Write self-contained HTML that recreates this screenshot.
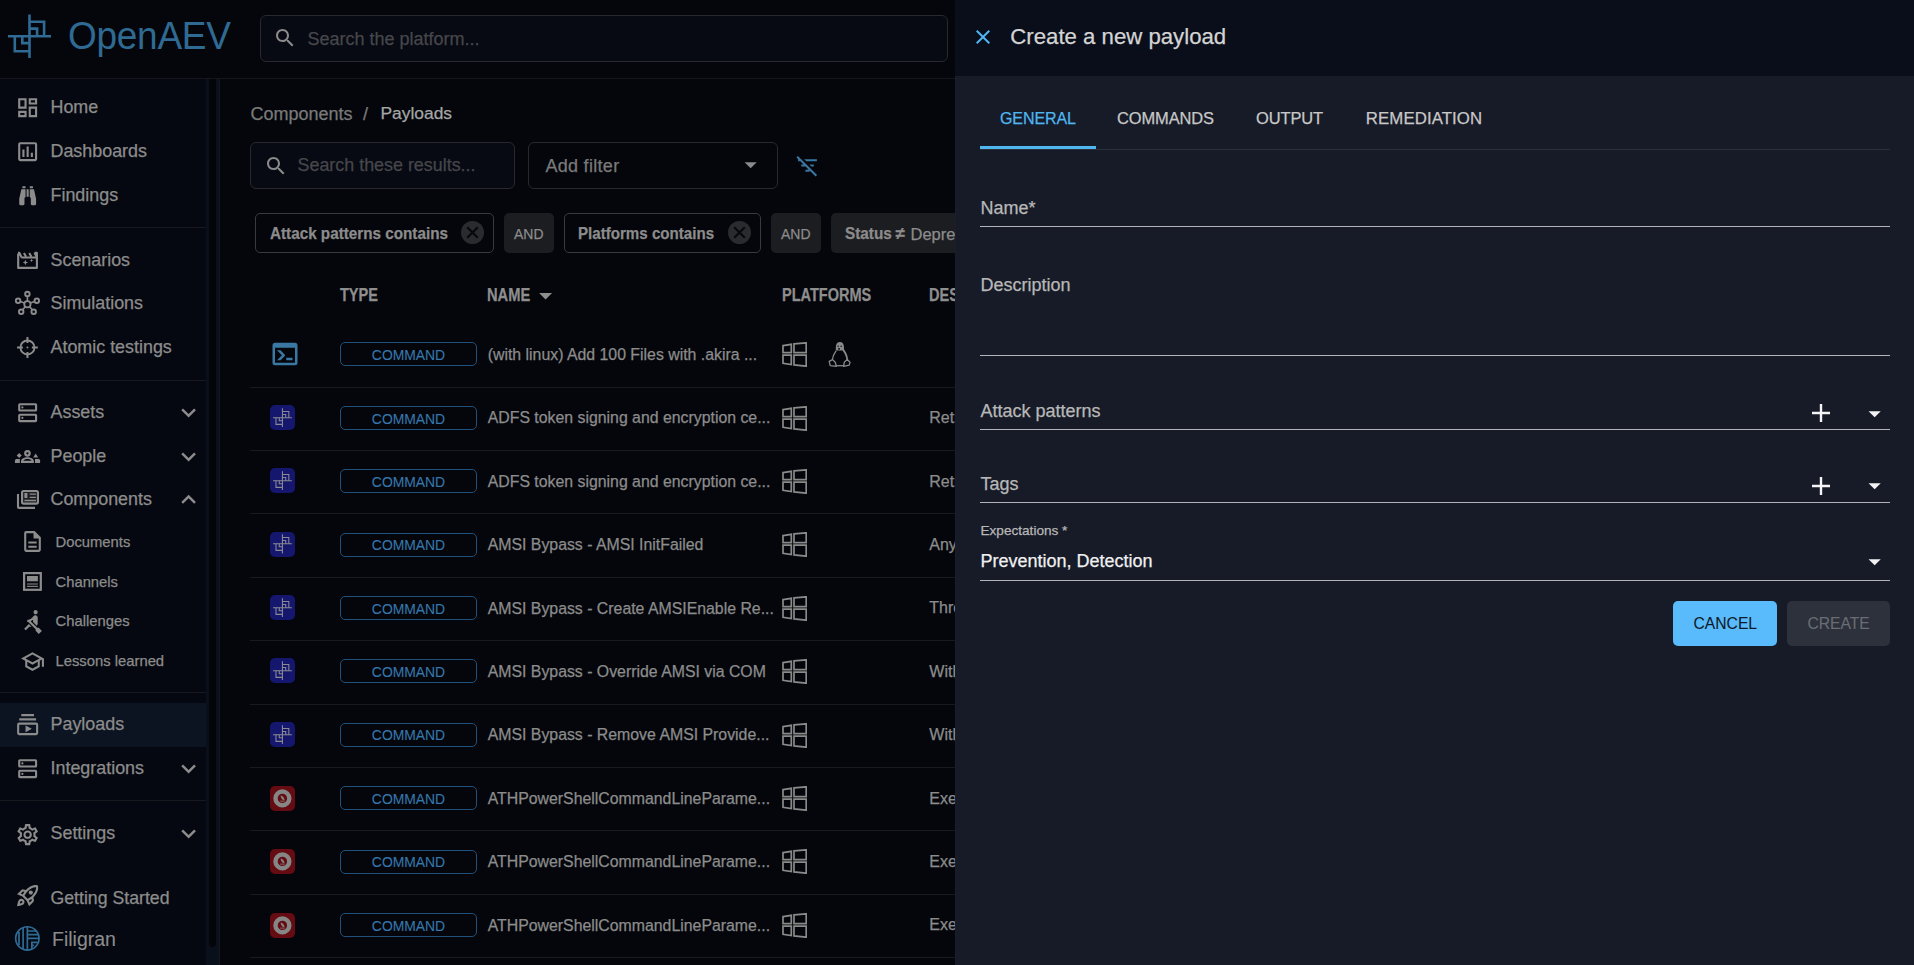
<!DOCTYPE html><html><head><meta charset="utf-8"><style>
html,body{margin:0;padding:0;}
body{width:1914px;height:965px;overflow:hidden;position:relative;background:#04060b;font-family:"Liberation Sans", sans-serif;}
.t{position:absolute;white-space:nowrap;font-family:"Liberation Sans", sans-serif;-webkit-text-stroke:0.25px currentColor;}
svg{display:block}
</style></head><body>
<div style="position:absolute;left:0px;top:0px;width:1914px;height:78px;background:#04060b"></div>
<div style="position:absolute;left:0px;top:78px;width:955px;height:1px;background:#15171c"></div>
<svg style="position:absolute;left:8.00px;top:13.50px;color:#2f6b95" width="44" height="44" viewBox="0 0 44 44" fill="#2f6b95"><g fill="none" stroke="currentColor" stroke-width="2.6" stroke-linecap="butt"><path d="M21.5 0.5V44.5M0 22.2H43"/><path d="M21.5 7.8H36.1V22.2M21.5 14.6H29.1V22.2"/><path d="M21.5 37.3H6.8V22.2M21.5 29.1H14.3V22.2"/></g></svg>
<div class="t" style="left:68.3px;top:16.48px;font-size:39.6px;line-height:39.6px;color:#2f6a93;font-weight:400;transform-origin:left top;transform:scaleX(0.935);letter-spacing:-0.3px;-webkit-text-stroke:0">OpenAEV</div>
<div style="position:absolute;left:260px;top:15px;width:688px;height:47px;box-sizing:border-box;border:1px solid #27292e;border-radius:6px;background:#070a12"></div>
<svg style="position:absolute;left:272.50px;top:26.00px;" width="24" height="24" viewBox="0 0 24 24" fill="#8a8a8a"><path d="M15.5 14h-.79l-.28-.27C15.41 12.59 16 11.11 16 9.5 16 5.91 13.09 3 9.5 3S3 5.91 3 9.5 5.91 16 9.5 16c1.61 0 3.09-.59 4.23-1.57l.27.28v.79l5 4.99L20.49 19l-4.99-5zm-6 0C7.01 14 5 11.99 5 9.5S7.01 5 9.5 5 14 7.01 14 9.5 11.99 14 9.5 14z"/></svg>
<div class="t" style="left:307.5px;top:29.66px;font-size:18px;line-height:18px;color:#46464b;font-weight:400;">Search the platform...</div>
<div style="position:absolute;left:0px;top:79px;width:206px;height:886px;background:#050810"></div>
<div style="position:absolute;left:206px;top:79px;width:13px;height:886px;background:#0a0f1c"></div>
<div style="position:absolute;left:209px;top:79px;width:7px;height:867.5px;background:#040508;border-radius:0 0 4px 4px"></div>
<div style="position:absolute;left:219px;top:79px;width:1px;height:886px;background:#15171c"></div>
<div style="position:absolute;left:0px;top:227px;width:206px;height:1px;background:#17191e"></div>
<div style="position:absolute;left:0px;top:380px;width:206px;height:1px;background:#17191e"></div>
<div style="position:absolute;left:0px;top:692px;width:206px;height:1px;background:#17191e"></div>
<div style="position:absolute;left:0px;top:800px;width:206px;height:1px;background:#17191e"></div>
<div style="position:absolute;left:0px;top:703px;width:206px;height:44px;background:#0b1420"></div>
<svg style="position:absolute;left:14.80px;top:94.95px;color:#8c8c8c" width="25.3" height="25.3" viewBox="0 0 24 24" fill="#8c8c8c"><path d="M19 5v2h-4V5h4M9 5v6H5V5h4m10 8v6h-4v-6h4M9 17v2H5v-2h4M21 3h-8v6h8V3zM11 3H3v10h8V3zm10 8h-8v10h8V11zm-10 4H3v6h8v-6z"/></svg>
<div class="t" style="left:50.5px;top:99.25px;font-size:17.9px;line-height:17.9px;color:#8c8c8c;font-weight:400;">Home</div>
<svg style="position:absolute;left:14.80px;top:138.95px;color:#8c8c8c" width="25.3" height="25.3" viewBox="0 0 24 24" fill="#8c8c8c"><path d="M19 3H5c-1.1 0-2 .9-2 2v14c0 1.1.9 2 2 2h14c1.1 0 2-.9 2-2V5c0-1.1-.9-2-2-2zm0 16H5V5h14v14zM7 10h2v7H7zm4-3h2v10h-2zm4 6h2v4h-2z"/></svg>
<div class="t" style="left:50.5px;top:143.25px;font-size:17.9px;line-height:17.9px;color:#8c8c8c;font-weight:400;">Dashboards</div>
<svg style="position:absolute;left:14.80px;top:182.95px;color:#8c8c8c" width="25.3" height="25.3" viewBox="0 0 24 24" fill="#8c8c8c"><path d="M11,6H13V13H11V6M9,20A1,1 0 0,1 8,21H5A1,1 0 0,1 4,20V15L6,6H10V13A1,1 0 0,1 9,14V20M10,5H7V3H10V5M15,20V14A1,1 0 0,1 14,13V6H18L20,15V20A1,1 0 0,1 19,21H16A1,1 0 0,1 15,20M14,5V3H17V5H14Z"/></svg>
<div class="t" style="left:50.5px;top:187.25px;font-size:17.9px;line-height:17.9px;color:#8c8c8c;font-weight:400;">Findings</div>
<div class="t" style="left:50.5px;top:252.25px;font-size:17.9px;line-height:17.9px;color:#8c8c8c;font-weight:400;">Scenarios</div>
<svg style="position:absolute;left:12px;top:246px;color:#8c8c8c" width="30" height="30" viewBox="0 0 30 30" fill="#8c8c8c"><g fill="none" stroke="currentColor" stroke-width="2.1" stroke-linejoin="round"><path d="M6.2 7.4V21.9H24.9V6.9H22.4M9.3 11.5H24.9M6.4 7L7.3 6.7L9.5 11.3M11.9 6.9L14 10.6M17.2 6.9L19.3 10.6M22.5 6.9L24.3 10"/><path d="M6.2 6.9H7.2"/></g><path d="M13.4 13.8l.8 1.9 1.9.8-1.9.8-.8 1.9-.8-1.9-1.9-.8 1.9-.8z"/><path d="M19.5 12.8l.5 1.2 1.2.5-1.2.5-.5 1.2-.5-1.2-1.2-.5 1.2-.5z"/></svg>
<div class="t" style="left:50.5px;top:295.25px;font-size:17.9px;line-height:17.9px;color:#8c8c8c;font-weight:400;">Simulations</div>
<svg style="position:absolute;left:12px;top:289px;color:#8c8c8c" width="30" height="30" viewBox="0 0 30 30" fill="#8c8c8c"><g fill="none" stroke="currentColor"><circle cx="15.4" cy="15.2" r="3.15" stroke-width="1.8"/><g stroke-width="1.9"><circle cx="15.4" cy="5" r="2.25"/><circle cx="6.1" cy="11.8" r="2.25"/><circle cx="24.8" cy="11.8" r="2.25"/><circle cx="9.2" cy="22.7" r="2.25"/><circle cx="21.7" cy="22.7" r="2.25"/></g><path stroke-width="1.6" d="M15.4 7.3V12M8.3 12.6l4.1 1.5M22.5 12.6l-4.1 1.5M10.6 20.8l2.8-3.2M20.3 20.8l-2.8-3.2"/></g></svg>
<div class="t" style="left:50.5px;top:339.25px;font-size:17.9px;line-height:17.9px;color:#8c8c8c;font-weight:400;">Atomic testings</div>
<svg style="position:absolute;left:12px;top:333px;color:#8c8c8c" width="30" height="30" viewBox="0 0 30 30" fill="#8c8c8c"><g fill="none" stroke="currentColor"><circle cx="15.45" cy="14.45" r="7" stroke-width="1.9"/><path stroke-width="2" d="M15.45 4V9.9M15.45 19V24.9M5 14.45H10.9M19.9 14.45H25.8"/></g><circle cx="15.45" cy="14.45" r="0.95"/></svg>
<svg style="position:absolute;left:14.80px;top:399.95px;color:#8c8c8c" width="25.3" height="25.3" viewBox="0 0 24 24" fill="#8c8c8c"><g fill="none" stroke="currentColor" stroke-width="2"><rect x="4" y="4" width="16" height="6" rx=".6"/><rect x="4" y="14" width="16" height="6" rx=".6"/></g><circle cx="7" cy="7" r="1"/><circle cx="7" cy="17" r="1"/></svg>
<div class="t" style="left:50.5px;top:404.25px;font-size:17.9px;line-height:17.9px;color:#8c8c8c;font-weight:400;">Assets</div>
<svg style="position:absolute;left:173.80px;top:397.55px;" width="29.2" height="29.2" viewBox="0 0 24 24" fill="#8c8c8c"><path d="M16.59 8.59 12 13.17 7.41 8.59 6 10l6 6 6-6z"/></svg>
<div class="t" style="left:50.5px;top:448.25px;font-size:17.9px;line-height:17.9px;color:#8c8c8c;font-weight:400;">People</div>
<svg style="position:absolute;left:173.80px;top:441.55px;" width="29.2" height="29.2" viewBox="0 0 24 24" fill="#8c8c8c"><path d="M16.59 8.59 12 13.17 7.41 8.59 6 10l6 6 6-6z"/></svg>
<svg style="position:absolute;left:12px;top:441px;color:#8c8c8c" width="30" height="30" viewBox="0 0 30 30" fill="#8c8c8c"><circle cx="15.45" cy="12.3" r="2.25" fill="none" stroke="currentColor" stroke-width="2.2"/><path fill-rule="evenodd" d="M9 21.9V20.2C9 17.8 12 16.2 15.45 16.2S21.9 17.8 21.9 20.2V21.9zM11.4 19.8H19.5C19 18.7 17.4 18.1 15.45 18.1S11.9 18.7 11.4 19.8z"/><path d="M7.2 12l2.5 2.45-2.5 2.45-2.5-2.45z"/><path d="M23.7 12.6l2.5 3.9h-5z"/><path d="M2.95 21.9V19.5C2.95 18.5 3.8 17.9 4.9 17.9H7.9V21.9z"/><path d="M28.1 21.9V19.5C28.1 18.5 27.3 17.9 26.2 17.9H23V21.9z"/></svg>
<div class="t" style="left:50.5px;top:491.25px;font-size:17.9px;line-height:17.9px;color:#8c8c8c;font-weight:400;">Components</div>
<svg style="position:absolute;left:173.80px;top:485.26px;" width="29.2" height="29.2" viewBox="0 0 24 24" fill="#8c8c8c"><path d="m12 8-6 6 1.41 1.41L12 10.83l4.59 4.58L18 14z"/></svg>
<svg style="position:absolute;left:12px;top:484px;color:#8c8c8c" width="30" height="30" viewBox="0 0 30 30" fill="#8c8c8c"><rect x="10.6" y="7.5" width="14.8" height="11.8" fill="#1d1f24"/><g fill="none" stroke="currentColor" stroke-width="2.1"><rect x="10.05" y="6.95" width="15.9" height="12.7" rx="1.6"/><path d="M6 9.9V22.9a1 1 0 0 0 1 1H23"/></g><rect x="12.4" y="9" width="3" height="5"/><path d="M17.7 9.4h6.2v1.4h-6.2zM17.7 12.7h6.2v1.4h-6.2zM12.4 15.8h11.5v1.4H12.4z"/></svg>
<svg style="position:absolute;left:19.90px;top:529.20px;color:#8c8c8c" width="25" height="25" viewBox="0 0 24 24" fill="#8c8c8c"><path d="M8 16h8v2H8zm0-4h8v2H8zm6-10H6c-1.1 0-2 .9-2 2v16c0 1.1.89 2 2 2h12c1.1 0 2-.9 2-2V8l-6-6zm4 18H6V4h7v5h5v11z"/></svg>
<div class="t" style="left:55.5px;top:534.87px;font-size:14.8px;line-height:14.8px;color:#8c8c8c;font-weight:400;">Documents</div>
<div class="t" style="left:55.5px;top:574.57px;font-size:14.8px;line-height:14.8px;color:#8c8c8c;font-weight:400;">Channels</div>
<svg style="position:absolute;left:18px;top:567px;color:#8c8c8c" width="30" height="30" viewBox="0 0 30 30" fill="#8c8c8c"><rect x="6.1" y="6.1" width="16.7" height="16.7" fill="none" stroke="currentColor" stroke-width="2.2"/><rect x="9" y="9" width="10.9" height="5.3"/><rect x="9" y="16" width="10.9" height="2" fill="#4a4a4c"/><rect x="9" y="18.8" width="10.9" height="1.1"/></svg>
<svg style="position:absolute;left:19.90px;top:608.60px;color:#8c8c8c" width="25" height="25" viewBox="0 0 24 24" fill="#8c8c8c"><path d="M8.5 14.5 4 19l1.5 1.5L9 17h2l-2.5-2.5zM15 1c-1.1 0-2 .9-2 2s.9 2 2 2 2-.9 2-2-.9-2-2-2zm6 20.01L18 24l-2.99-3.01V19.5l-7.1-7.09c-.31.05-.61.07-.91.07v-2.16c1.66.03 3.61-.87 4.67-2.04l1.4-1.55c.19-.21.43-.38.69-.5.29-.14.62-.23.96-.23h.03C15.99 6.01 17 7.02 17 8.26v5.75c0 .84-.35 1.61-.92 2.16l-3.58-3.58v-2.27c-.63.52-1.43 1.02-2.29 1.39L16.5 18H18l3 3.01z"/></svg>
<div class="t" style="left:55.5px;top:614.27px;font-size:14.8px;line-height:14.8px;color:#8c8c8c;font-weight:400;">Challenges</div>
<svg style="position:absolute;left:19.90px;top:648.60px;color:#8c8c8c" width="25" height="25" viewBox="0 0 24 24" fill="#8c8c8c"><path d="M12 3 1 9l4 2.18v6L12 21l7-3.82v-6l2-1.09V17h2V9L12 3zm6.82 6L12 12.72 5.18 9 12 5.28 18.82 9zM17 15.99l-5 2.73-5-2.73v-3.72L12 15l5-2.73v3.72z"/></svg>
<div class="t" style="left:55.5px;top:654.27px;font-size:14.8px;line-height:14.8px;color:#8c8c8c;font-weight:400;">Lessons learned</div>
<svg style="position:absolute;left:14.80px;top:711.95px;color:#8c8c8c" width="25.3" height="25.3" viewBox="0 0 24 24" fill="#8c8c8c"><path d="M4 6h16v2H4zm2-4h12v2H6zm14 8H4c-1.1 0-2 .9-2 2v8c0 1.1.9 2 2 2h16c1.1 0 2-.9 2-2v-8c0-1.1-.9-2-2-2zm0 10H4v-8h16v8zm-10-7.27v6.53L16 16z"/></svg>
<div class="t" style="left:50.5px;top:716.25px;font-size:17.9px;line-height:17.9px;color:#8c8c8c;font-weight:400;">Payloads</div>
<svg style="position:absolute;left:14.80px;top:755.95px;color:#8c8c8c" width="25.3" height="25.3" viewBox="0 0 24 24" fill="#8c8c8c"><g fill="none" stroke="currentColor" stroke-width="2"><rect x="4" y="4" width="16" height="6" rx=".6"/><rect x="4" y="14" width="16" height="6" rx=".6"/></g><circle cx="7" cy="7" r="1"/><circle cx="7" cy="17" r="1"/></svg>
<div class="t" style="left:50.5px;top:760.25px;font-size:17.9px;line-height:17.9px;color:#8c8c8c;font-weight:400;">Integrations</div>
<svg style="position:absolute;left:173.80px;top:753.55px;" width="29.2" height="29.2" viewBox="0 0 24 24" fill="#8c8c8c"><path d="M16.59 8.59 12 13.17 7.41 8.59 6 10l6 6 6-6z"/></svg>
<svg style="position:absolute;left:14.80px;top:821.55px;color:#8c8c8c" width="25.3" height="25.3" viewBox="0 0 24 24" fill="#8c8c8c"><path d="M19.43 12.98c.04-.32.07-.64.07-.98 0-.34-.03-.66-.07-.98l2.11-1.65c.19-.15.24-.42.12-.64l-2-3.46c-.09-.16-.26-.25-.44-.25-.06 0-.12.01-.17.03l-2.49 1c-.52-.4-1.08-.73-1.69-.98l-.38-2.65C14.46 2.18 14.25 2 14 2h-4c-.25 0-.46.18-.49.42l-.38 2.65c-.61.25-1.17.59-1.69.98l-2.49-1c-.06-.02-.12-.03-.18-.03-.17 0-.34.09-.43.25l-2 3.46c-.13.22-.07.49.12.64l2.11 1.65c-.04.32-.07.65-.07.98 0 .33.03.66.07.98l-2.11 1.65c-.19.15-.24.42-.12.64l2 3.46c.09.16.26.25.44.25.06 0 .12-.01.17-.03l2.49-1c.52.4 1.08.73 1.69.98l.38 2.65c.03.24.24.42.49.42h4c.25 0 .46-.18.49-.42l.38-2.65c.61-.25 1.17-.59 1.69-.98l2.49 1c.06.02.12.03.18.03.17 0 .34-.09.43-.25l2-3.46c.12-.22.07-.49-.12-.64l-2.11-1.65zm-1.98-1.71c.04.31.05.52.05.73 0 .21-.02.43-.05.73l-.14 1.13.89.7 1.08.84-.7 1.21-1.27-.51-1.04-.42-.9.68c-.43.32-.84.56-1.25.73l-1.06.43-.16 1.13-.2 1.35h-1.4l-.19-1.35-.16-1.13-1.06-.43c-.43-.18-.83-.41-1.23-.71l-.91-.7-1.06.43-1.27.51-.7-1.21 1.08-.84.89-.7-.14-1.13c-.03-.31-.05-.54-.05-.74s.02-.43.05-.73l.14-1.13-.89-.7-1.08-.84.7-1.21 1.27.51 1.04.42.9-.68c.43-.32.84-.56 1.25-.73l1.06-.43.16-1.13.2-1.35h1.39l.19 1.35.16 1.13 1.06.43c.43.18.83.41 1.23.71l.91.7 1.06-.43 1.27-.51.7 1.21-1.07.85-.89.7.14 1.13zM12 8c-2.21 0-4 1.79-4 4s1.79 4 4 4 4-1.79 4-4-1.79-4-4-4zm0 6c-1.1 0-2-.9-2-2s.9-2 2-2 2 .9 2 2-.9 2-2 2z"/></svg>
<div class="t" style="left:50.5px;top:825.25px;font-size:17.9px;line-height:17.9px;color:#8c8c8c;font-weight:400;">Settings</div>
<svg style="position:absolute;left:173.80px;top:818.55px;" width="29.2" height="29.2" viewBox="0 0 24 24" fill="#8c8c8c"><path d="M16.59 8.59 12 13.17 7.41 8.59 6 10l6 6 6-6z"/></svg>
<svg style="position:absolute;left:15.10px;top:883.45px;color:#8c8c8c" width="25.3" height="25.3" viewBox="0 0 24 24" fill="#8c8c8c"><path d="M6 15c-.83 0-1.58.34-2.12.88C2.7 17.06 2 22 2 22s4.94-.7 6.12-1.88A2.996 2.996 0 0 0 6 15zm.71 3.71c-.28.28-2.17.76-2.17.76s.47-1.88.76-2.17c.17-.19.42-.3.7-.3a1.003 1.003 0 0 1 .71 1.710zm10.71-5.06c6.36-6.36 4.240-11.31 4.24-11.31S16.71.22 10.35 6.58l-2.49-.5a2.03 2.03 0 0 0-1.81.55L2 10.69l5 2.14L11.17 17l2.14 5 4.05-4.05c.47-.47.68-1.15.55-1.81l-.49-2.49zM7.41 10.83l-1.91-.82 1.97-1.97 1.44.29c-.57.83-1.08 1.7-1.5 2.5zm6.58 7.67-.82-1.91c.8-.42 1.67-.93 2.49-1.5l.29 1.44-1.96 1.97zM16 12.24c-1.32 1.32-3.38 2.4-4.04 2.730l-2.93-2.93c.32-.65 1.4-2.71 2.73-4.04 4.68-4.68 8.23-3.99 8.23-3.99s.69 3.55-3.99 8.23zM15 11c1.1 0 2-.9 2-2s-.9-2-2-2-2 .9-2 2 .9 2 2 2z"/></svg>
<div class="t" style="left:50.5px;top:889.52px;font-size:17.7px;line-height:17.7px;color:#8c8c8c;font-weight:400;">Getting Started</div>
<svg style="position:absolute;left:10px;top:922px;color:#8c8c8c" width="36" height="36" viewBox="0 0 36 36" fill="#8c8c8c"><g fill="none" stroke="#2f6b95" stroke-width="1.7"><circle cx="17.35" cy="16.4" r="11.65"/><path d="M9 10V23.1M13.1 6V26.8M17.35 4.8V28M17.35 9H27M17.35 12.6H28.5M17.35 16.4H28.9M21.8 27V20.3H27.6M21.8 23.3H23.9"/></g></svg>
<div class="t" style="left:52.0px;top:930.39px;font-size:19.5px;line-height:19.5px;color:#8c8c8c;font-weight:400;-webkit-text-stroke:0.1px currentColor">Filigran</div>
<div class="t" style="left:250.5px;top:104.86px;font-size:18px;line-height:18px;color:#7a7a7a;font-weight:400;">Components</div>
<div class="t" style="left:363.0px;top:104.86px;font-size:18px;line-height:18px;color:#7a7a7a;font-weight:400;">/</div>
<div class="t" style="left:380.5px;top:105.37px;font-size:17.4px;line-height:17.4px;color:#a6a6a6;font-weight:400;">Payloads</div>
<div style="position:absolute;left:250px;top:142px;width:265px;height:47px;box-sizing:border-box;border:1px solid #27292e;border-radius:6px;background:#070a12"></div>
<svg style="position:absolute;left:263.50px;top:154.00px;" width="24" height="24" viewBox="0 0 24 24" fill="#8a8a8a"><path d="M15.5 14h-.79l-.28-.27C15.41 12.59 16 11.11 16 9.5 16 5.91 13.09 3 9.5 3S3 5.91 3 9.5 5.91 16 9.5 16c1.61 0 3.09-.59 4.23-1.57l.27.28v.79l5 4.99L20.49 19l-4.99-5zm-6 0C7.01 14 5 11.99 5 9.5S7.01 5 9.5 5 14 7.01 14 9.5 11.99 14 9.5 14z"/></svg>
<div class="t" style="left:297.5px;top:156.95px;font-size:17.9px;line-height:17.9px;color:#46464b;font-weight:400;">Search these results...</div>
<div style="position:absolute;left:528px;top:142px;width:250px;height:47px;box-sizing:border-box;border:1px solid #27292e;border-radius:6px"></div>
<div class="t" style="left:545.4px;top:156.86px;font-size:18px;line-height:18px;color:#7a7a7a;font-weight:400;letter-spacing:0.3px">Add filter</div>
<svg style="position:absolute;left:736.40px;top:150.40px;" width="29.3" height="29.3" viewBox="0 0 24 24" fill="#8a8a8a"><path d="M7 10l5 5 5-5z"/></svg>
<svg style="position:absolute;left:795.20px;top:153.30px;" width="25" height="25" viewBox="0 0 24 24" fill="#3a77a2"><path d="M10.83 8H21V6H8.83l2 2zm5 5H18v-2h-4.17l2 2zM14 16.83V18h-4v-2h3.17l-3-3H6v-2h2.17l-3-3H3V6h.17L1.39 4.22 2.8 2.81l18.38 18.38-1.41 1.41L14 16.83z"/></svg>
<div style="position:absolute;left:255px;top:213px;width:239px;height:40px;box-sizing:border-box;border:1px solid #3a3a3d;border-radius:5px"></div>
<div class="t" style="left:269.7px;top:225.31px;font-size:17px;line-height:17px;color:#8c8c8c;font-weight:700;transform-origin:left top;transform:scaleX(0.897)">Attack patterns contains</div>
<div style="position:absolute;left:461px;top:221px;width:23px;height:23px;border-radius:50%;background:#2a2b2e"></div>
<svg style="position:absolute;left:461px;top:221px" width="23" height="23" viewBox="0 0 23 23"><path d="M6.2 6.2L16.8 16.8M16.8 6.2L6.2 16.8" stroke="#07080b" stroke-width="2.2"/></svg>
<div style="position:absolute;left:504px;top:213px;width:50px;height:40px;background:#1c1d21;border-radius:5px"></div>
<div class="t" style="left:513.9px;top:226.28px;font-size:15.5px;line-height:15.5px;color:#8c8c8c;font-weight:400;transform-origin:left top;transform:scaleX(0.9)">AND</div>
<div style="position:absolute;left:564px;top:213px;width:197px;height:40px;box-sizing:border-box;border:1px solid #3a3a3d;border-radius:5px"></div>
<div class="t" style="left:578.4px;top:225.31px;font-size:17px;line-height:17px;color:#8c8c8c;font-weight:700;transform-origin:left top;transform:scaleX(0.889)">Platforms contains</div>
<div style="position:absolute;left:728px;top:221px;width:23px;height:23px;border-radius:50%;background:#2a2b2e"></div>
<svg style="position:absolute;left:728px;top:221px" width="23" height="23" viewBox="0 0 23 23"><path d="M6.2 6.2L16.8 16.8M16.8 6.2L6.2 16.8" stroke="#07080b" stroke-width="2.2"/></svg>
<div style="position:absolute;left:771px;top:213px;width:50px;height:40px;background:#1c1d21;border-radius:5px"></div>
<div class="t" style="left:781.2px;top:226.28px;font-size:15.5px;line-height:15.5px;color:#8c8c8c;font-weight:400;transform-origin:left top;transform:scaleX(0.9)">AND</div>
<div style="position:absolute;left:831px;top:213px;width:169px;height:40px;background:#1c1d21;border-radius:5px"></div>
<div class="t" style="left:845.3px;top:225.31px;font-size:17px;line-height:17px;color:#8c8c8c;font-weight:700;transform-origin:left top;transform:scaleX(0.9)">Status</div>
<div class="t" style="left:895.5px;top:225.31px;font-size:17px;line-height:17px;color:#8c8c8c;font-weight:700;">&#8800;</div>
<div class="t" style="left:910.5px;top:225.73px;font-size:16.5px;line-height:16.5px;color:#8c8c8c;font-weight:400;">Deprecated</div>
<div class="t" style="left:340.0px;top:287.29px;font-size:17.5px;line-height:17.5px;color:#8e8e8e;font-weight:700;transform-origin:left top;transform:scaleX(0.83)">TYPE</div>
<div class="t" style="left:487.3px;top:287.29px;font-size:17.5px;line-height:17.5px;color:#8e8e8e;font-weight:700;transform-origin:left top;transform:scaleX(0.84)">NAME</div>
<svg style="position:absolute;left:530.20px;top:280.40px;" width="31.2" height="31.2" viewBox="0 0 24 24" fill="#8e8e8e"><path d="M7 10l5 5 5-5z"/></svg>
<div class="t" style="left:781.7px;top:287.29px;font-size:17.5px;line-height:17.5px;color:#8e8e8e;font-weight:700;transform-origin:left top;transform:scaleX(0.83)">PLATFORMS</div>
<div class="t" style="left:929.3px;top:287.29px;font-size:17.5px;line-height:17.5px;color:#8e8e8e;font-weight:700;transform-origin:left top;transform:scaleX(0.83)">DESCRIPTION</div>
<svg style="position:absolute;left:269.80px;top:338.95px;" width="30" height="30" viewBox="0 0 24 24" fill="#3a78a4"><path d="M20,19V7H4V19H20M20,3A2,2 0 0,1 22,5V19A2,2 0 0,1 20,21H4A2,2 0 0,1 2,19V5C2,3.89 2.9,3 4,3H20M13,17V15H18V17H13M9.58,13L5.57,9H8.4L11.7,12.3C12.09,12.69 12.09,13.33 11.7,13.72L8.42,17H5.59L9.58,13Z"/></svg>
<div style="position:absolute;left:340px;top:342px;width:137px;height:24px;box-sizing:border-box;border:1px solid #21507a;border-radius:5px"></div>
<div class="t" style="left:340px;top:343.20px;width:137px;text-align:center;font-size:13.9px;line-height:24px;color:#3677ad;-webkit-text-stroke:0.1px currentColor">COMMAND</div>
<div class="t" style="left:487.7px;top:347.08px;font-size:15.85px;line-height:15.85px;color:#8c8c8c;font-weight:400;">(with linux) Add 100 Files with .akira ...</div>
<svg style="position:absolute;left:781.70px;top:342.30px;color:#8a8a8a" width="25" height="25" viewBox="0 0 25 25" fill="#8a8a8a"><g fill="none" stroke="currentColor" stroke-width="1.7" stroke-linejoin="miter"><path d="M1 3.6L9.3 2.3V10.6H1z"/><path d="M12 1.9L24.2 0.8V10.6H12z"/><path d="M1 13.2H9.3V22.6L1 21.3z"/><path d="M12 13.2H24.2V24.2L12 22.9z"/></g></svg>
<svg style="position:absolute;left:824.00px;top:338.00px;color:#8a8a8a" width="30" height="32" viewBox="0 0 30 32" fill="#8a8a8a"><path d="M12 12.6C11.5 9 11.7 4 15.9 4S20.3 9 19.8 12.6z"/><circle cx="14.1" cy="8.2" r=".7" fill="#05070c"/><circle cx="17.2" cy="8.2" r=".7" fill="#05070c"/><ellipse cx="15" cy="10.9" rx="1" ry=".8" fill="#05070c"/><g fill="none" stroke="currentColor" stroke-width="1.3" stroke-linejoin="round"><path d="M12.1 12.6C10.3 15.3 8.7 18.3 8.3 21.8"/><path d="M5.2 23.4L8.6 21.6L11.2 24.2L12.4 28.3L6.2 27.6z"/><path d="M26 24.3L23.2 21.4L20.3 24.2L19.6 28.4L25.2 27.2z"/><path d="M12.4 27.7H19.6"/></g><path d="M19.6 10.8C21.6 13.8 23.9 17.2 24 21.2L22.4 21.8C22 18 20.4 15 18.6 12.8z"/></svg>
<div style="position:absolute;left:250px;top:387px;width:705px;height:1px;background:#17191d"></div>
<div style="position:absolute;left:270px;top:404.88px;width:25px;height:25px;border-radius:5px;background:#15176f"></div>
<svg style="position:absolute;left:272.97px;top:407.64px;color:#8a8a92" width="19.3" height="19.3" viewBox="0 0 44 44"><g fill="none" stroke="currentColor" stroke-width="2.4" stroke-linecap="butt"><path d="M21.5 0.5V44.5M0 22.2H43"/><path d="M21.5 7.8H36.1V22.2M21.5 14.6H29.1V22.2"/><path d="M21.5 37.3H6.8V22.2M21.5 29.1H14.3V22.2"/></g></svg>
<div style="position:absolute;left:340px;top:406px;width:137px;height:24px;box-sizing:border-box;border:1px solid #21507a;border-radius:5px"></div>
<div class="t" style="left:340px;top:406.58px;width:137px;text-align:center;font-size:13.9px;line-height:24px;color:#3677ad;-webkit-text-stroke:0.1px currentColor">COMMAND</div>
<div class="t" style="left:487.7px;top:410.46px;font-size:15.85px;line-height:15.85px;color:#8c8c8c;font-weight:400;">ADFS token signing and encryption ce...</div>
<svg style="position:absolute;left:781.70px;top:405.68px;color:#8a8a8a" width="25" height="25" viewBox="0 0 25 25" fill="#8a8a8a"><g fill="none" stroke="currentColor" stroke-width="1.7" stroke-linejoin="miter"><path d="M1 3.6L9.3 2.3V10.6H1z"/><path d="M12 1.9L24.2 0.8V10.6H12z"/><path d="M1 13.2H9.3V22.6L1 21.3z"/><path d="M12 13.2H24.2V24.2L12 22.9z"/></g></svg>
<div class="t" style="left:929.3px;top:410.34px;font-size:16px;line-height:16px;color:#8c8c8c;font-weight:400;">Retrieves</div>
<div style="position:absolute;left:250px;top:450px;width:705px;height:1px;background:#17191d"></div>
<div style="position:absolute;left:270px;top:468.26px;width:25px;height:25px;border-radius:5px;background:#15176f"></div>
<svg style="position:absolute;left:272.97px;top:471.02px;color:#8a8a92" width="19.3" height="19.3" viewBox="0 0 44 44"><g fill="none" stroke="currentColor" stroke-width="2.4" stroke-linecap="butt"><path d="M21.5 0.5V44.5M0 22.2H43"/><path d="M21.5 7.8H36.1V22.2M21.5 14.6H29.1V22.2"/><path d="M21.5 37.3H6.8V22.2M21.5 29.1H14.3V22.2"/></g></svg>
<div style="position:absolute;left:340px;top:469px;width:137px;height:24px;box-sizing:border-box;border:1px solid #21507a;border-radius:5px"></div>
<div class="t" style="left:340px;top:469.96px;width:137px;text-align:center;font-size:13.9px;line-height:24px;color:#3677ad;-webkit-text-stroke:0.1px currentColor">COMMAND</div>
<div class="t" style="left:487.7px;top:473.84px;font-size:15.85px;line-height:15.85px;color:#8c8c8c;font-weight:400;">ADFS token signing and encryption ce...</div>
<svg style="position:absolute;left:781.70px;top:469.06px;color:#8a8a8a" width="25" height="25" viewBox="0 0 25 25" fill="#8a8a8a"><g fill="none" stroke="currentColor" stroke-width="1.7" stroke-linejoin="miter"><path d="M1 3.6L9.3 2.3V10.6H1z"/><path d="M12 1.9L24.2 0.8V10.6H12z"/><path d="M1 13.2H9.3V22.6L1 21.3z"/><path d="M12 13.2H24.2V24.2L12 22.9z"/></g></svg>
<div class="t" style="left:929.3px;top:473.72px;font-size:16px;line-height:16px;color:#8c8c8c;font-weight:400;">Retrieves</div>
<div style="position:absolute;left:250px;top:513px;width:705px;height:1px;background:#17191d"></div>
<div style="position:absolute;left:270px;top:531.64px;width:25px;height:25px;border-radius:5px;background:#15176f"></div>
<svg style="position:absolute;left:272.97px;top:534.40px;color:#8a8a92" width="19.3" height="19.3" viewBox="0 0 44 44"><g fill="none" stroke="currentColor" stroke-width="2.4" stroke-linecap="butt"><path d="M21.5 0.5V44.5M0 22.2H43"/><path d="M21.5 7.8H36.1V22.2M21.5 14.6H29.1V22.2"/><path d="M21.5 37.3H6.8V22.2M21.5 29.1H14.3V22.2"/></g></svg>
<div style="position:absolute;left:340px;top:533px;width:137px;height:24px;box-sizing:border-box;border:1px solid #21507a;border-radius:5px"></div>
<div class="t" style="left:340px;top:533.34px;width:137px;text-align:center;font-size:13.9px;line-height:24px;color:#3677ad;-webkit-text-stroke:0.1px currentColor">COMMAND</div>
<div class="t" style="left:487.7px;top:537.22px;font-size:15.85px;line-height:15.85px;color:#8c8c8c;font-weight:400;">AMSI Bypass - AMSI InitFailed</div>
<svg style="position:absolute;left:781.70px;top:532.44px;color:#8a8a8a" width="25" height="25" viewBox="0 0 25 25" fill="#8a8a8a"><g fill="none" stroke="currentColor" stroke-width="1.7" stroke-linejoin="miter"><path d="M1 3.6L9.3 2.3V10.6H1z"/><path d="M12 1.9L24.2 0.8V10.6H12z"/><path d="M1 13.2H9.3V22.6L1 21.3z"/><path d="M12 13.2H24.2V24.2L12 22.9z"/></g></svg>
<div class="t" style="left:929.3px;top:537.10px;font-size:16px;line-height:16px;color:#8c8c8c;font-weight:400;">Any attempt</div>
<div style="position:absolute;left:250px;top:577px;width:705px;height:1px;background:#17191d"></div>
<div style="position:absolute;left:270px;top:595.02px;width:25px;height:25px;border-radius:5px;background:#15176f"></div>
<svg style="position:absolute;left:272.97px;top:597.78px;color:#8a8a92" width="19.3" height="19.3" viewBox="0 0 44 44"><g fill="none" stroke="currentColor" stroke-width="2.4" stroke-linecap="butt"><path d="M21.5 0.5V44.5M0 22.2H43"/><path d="M21.5 7.8H36.1V22.2M21.5 14.6H29.1V22.2"/><path d="M21.5 37.3H6.8V22.2M21.5 29.1H14.3V22.2"/></g></svg>
<div style="position:absolute;left:340px;top:596px;width:137px;height:24px;box-sizing:border-box;border:1px solid #21507a;border-radius:5px"></div>
<div class="t" style="left:340px;top:596.72px;width:137px;text-align:center;font-size:13.9px;line-height:24px;color:#3677ad;-webkit-text-stroke:0.1px currentColor">COMMAND</div>
<div class="t" style="left:487.7px;top:600.60px;font-size:15.85px;line-height:15.85px;color:#8c8c8c;font-weight:400;">AMSI Bypass - Create AMSIEnable Re...</div>
<svg style="position:absolute;left:781.70px;top:595.82px;color:#8a8a8a" width="25" height="25" viewBox="0 0 25 25" fill="#8a8a8a"><g fill="none" stroke="currentColor" stroke-width="1.7" stroke-linejoin="miter"><path d="M1 3.6L9.3 2.3V10.6H1z"/><path d="M12 1.9L24.2 0.8V10.6H12z"/><path d="M1 13.2H9.3V22.6L1 21.3z"/><path d="M12 13.2H24.2V24.2L12 22.9z"/></g></svg>
<div class="t" style="left:929.3px;top:600.48px;font-size:16px;line-height:16px;color:#8c8c8c;font-weight:400;">Threat</div>
<div style="position:absolute;left:250px;top:640px;width:705px;height:1px;background:#17191d"></div>
<div style="position:absolute;left:270px;top:658.40px;width:25px;height:25px;border-radius:5px;background:#15176f"></div>
<svg style="position:absolute;left:272.97px;top:661.16px;color:#8a8a92" width="19.3" height="19.3" viewBox="0 0 44 44"><g fill="none" stroke="currentColor" stroke-width="2.4" stroke-linecap="butt"><path d="M21.5 0.5V44.5M0 22.2H43"/><path d="M21.5 7.8H36.1V22.2M21.5 14.6H29.1V22.2"/><path d="M21.5 37.3H6.8V22.2M21.5 29.1H14.3V22.2"/></g></svg>
<div style="position:absolute;left:340px;top:659px;width:137px;height:24px;box-sizing:border-box;border:1px solid #21507a;border-radius:5px"></div>
<div class="t" style="left:340px;top:660.10px;width:137px;text-align:center;font-size:13.9px;line-height:24px;color:#3677ad;-webkit-text-stroke:0.1px currentColor">COMMAND</div>
<div class="t" style="left:487.7px;top:663.98px;font-size:15.85px;line-height:15.85px;color:#8c8c8c;font-weight:400;">AMSI Bypass - Override AMSI via COM</div>
<svg style="position:absolute;left:781.70px;top:659.20px;color:#8a8a8a" width="25" height="25" viewBox="0 0 25 25" fill="#8a8a8a"><g fill="none" stroke="currentColor" stroke-width="1.7" stroke-linejoin="miter"><path d="M1 3.6L9.3 2.3V10.6H1z"/><path d="M12 1.9L24.2 0.8V10.6H12z"/><path d="M1 13.2H9.3V22.6L1 21.3z"/><path d="M12 13.2H24.2V24.2L12 22.9z"/></g></svg>
<div class="t" style="left:929.3px;top:663.86px;font-size:16px;line-height:16px;color:#8c8c8c;font-weight:400;">With</div>
<div style="position:absolute;left:250px;top:704px;width:705px;height:1px;background:#17191d"></div>
<div style="position:absolute;left:270px;top:721.78px;width:25px;height:25px;border-radius:5px;background:#15176f"></div>
<svg style="position:absolute;left:272.97px;top:724.54px;color:#8a8a92" width="19.3" height="19.3" viewBox="0 0 44 44"><g fill="none" stroke="currentColor" stroke-width="2.4" stroke-linecap="butt"><path d="M21.5 0.5V44.5M0 22.2H43"/><path d="M21.5 7.8H36.1V22.2M21.5 14.6H29.1V22.2"/><path d="M21.5 37.3H6.8V22.2M21.5 29.1H14.3V22.2"/></g></svg>
<div style="position:absolute;left:340px;top:723px;width:137px;height:24px;box-sizing:border-box;border:1px solid #21507a;border-radius:5px"></div>
<div class="t" style="left:340px;top:723.48px;width:137px;text-align:center;font-size:13.9px;line-height:24px;color:#3677ad;-webkit-text-stroke:0.1px currentColor">COMMAND</div>
<div class="t" style="left:487.7px;top:727.36px;font-size:15.85px;line-height:15.85px;color:#8c8c8c;font-weight:400;">AMSI Bypass - Remove AMSI Provide...</div>
<svg style="position:absolute;left:781.70px;top:722.58px;color:#8a8a8a" width="25" height="25" viewBox="0 0 25 25" fill="#8a8a8a"><g fill="none" stroke="currentColor" stroke-width="1.7" stroke-linejoin="miter"><path d="M1 3.6L9.3 2.3V10.6H1z"/><path d="M12 1.9L24.2 0.8V10.6H12z"/><path d="M1 13.2H9.3V22.6L1 21.3z"/><path d="M12 13.2H24.2V24.2L12 22.9z"/></g></svg>
<div class="t" style="left:929.3px;top:727.24px;font-size:16px;line-height:16px;color:#8c8c8c;font-weight:400;">With</div>
<div style="position:absolute;left:250px;top:767px;width:705px;height:1px;background:#17191d"></div>
<div style="position:absolute;left:270px;top:785.96px;width:25px;height:25px;border-radius:5px;background:#640c11"></div>
<svg style="position:absolute;left:270px;top:785.96px" width="25" height="25" viewBox="0 0 25 25"><circle cx="12.4" cy="12.4" r="6.9" fill="none" stroke="#868686" stroke-width="4.4"/><path d="M10.6 9.4C12.6 9.7 14.3 11.5 14.6 14.2L12.4 13.4C11.4 12.6 10.9 11.1 10.6 9.4z" fill="#868686"/><path d="M10.2 14.7H14.8V15.5H10.2z" fill="#868686"/></svg>
<div style="position:absolute;left:340px;top:786px;width:137px;height:24px;box-sizing:border-box;border:1px solid #21507a;border-radius:5px"></div>
<div class="t" style="left:340px;top:786.86px;width:137px;text-align:center;font-size:13.9px;line-height:24px;color:#3677ad;-webkit-text-stroke:0.1px currentColor">COMMAND</div>
<div class="t" style="left:487.7px;top:790.74px;font-size:15.85px;line-height:15.85px;color:#8c8c8c;font-weight:400;">ATHPowerShellCommandLineParame...</div>
<svg style="position:absolute;left:781.70px;top:785.96px;color:#8a8a8a" width="25" height="25" viewBox="0 0 25 25" fill="#8a8a8a"><g fill="none" stroke="currentColor" stroke-width="1.7" stroke-linejoin="miter"><path d="M1 3.6L9.3 2.3V10.6H1z"/><path d="M12 1.9L24.2 0.8V10.6H12z"/><path d="M1 13.2H9.3V22.6L1 21.3z"/><path d="M12 13.2H24.2V24.2L12 22.9z"/></g></svg>
<div class="t" style="left:929.3px;top:790.62px;font-size:16px;line-height:16px;color:#8c8c8c;font-weight:400;">Executes</div>
<div style="position:absolute;left:250px;top:830px;width:705px;height:1px;background:#17191d"></div>
<div style="position:absolute;left:270px;top:849.34px;width:25px;height:25px;border-radius:5px;background:#640c11"></div>
<svg style="position:absolute;left:270px;top:849.34px" width="25" height="25" viewBox="0 0 25 25"><circle cx="12.4" cy="12.4" r="6.9" fill="none" stroke="#868686" stroke-width="4.4"/><path d="M10.6 9.4C12.6 9.7 14.3 11.5 14.6 14.2L12.4 13.4C11.4 12.6 10.9 11.1 10.6 9.4z" fill="#868686"/><path d="M10.2 14.7H14.8V15.5H10.2z" fill="#868686"/></svg>
<div style="position:absolute;left:340px;top:850px;width:137px;height:24px;box-sizing:border-box;border:1px solid #21507a;border-radius:5px"></div>
<div class="t" style="left:340px;top:850.24px;width:137px;text-align:center;font-size:13.9px;line-height:24px;color:#3677ad;-webkit-text-stroke:0.1px currentColor">COMMAND</div>
<div class="t" style="left:487.7px;top:854.12px;font-size:15.85px;line-height:15.85px;color:#8c8c8c;font-weight:400;">ATHPowerShellCommandLineParame...</div>
<svg style="position:absolute;left:781.70px;top:849.34px;color:#8a8a8a" width="25" height="25" viewBox="0 0 25 25" fill="#8a8a8a"><g fill="none" stroke="currentColor" stroke-width="1.7" stroke-linejoin="miter"><path d="M1 3.6L9.3 2.3V10.6H1z"/><path d="M12 1.9L24.2 0.8V10.6H12z"/><path d="M1 13.2H9.3V22.6L1 21.3z"/><path d="M12 13.2H24.2V24.2L12 22.9z"/></g></svg>
<div class="t" style="left:929.3px;top:854.00px;font-size:16px;line-height:16px;color:#8c8c8c;font-weight:400;">Executes</div>
<div style="position:absolute;left:250px;top:894px;width:705px;height:1px;background:#17191d"></div>
<div style="position:absolute;left:270px;top:912.72px;width:25px;height:25px;border-radius:5px;background:#640c11"></div>
<svg style="position:absolute;left:270px;top:912.72px" width="25" height="25" viewBox="0 0 25 25"><circle cx="12.4" cy="12.4" r="6.9" fill="none" stroke="#868686" stroke-width="4.4"/><path d="M10.6 9.4C12.6 9.7 14.3 11.5 14.6 14.2L12.4 13.4C11.4 12.6 10.9 11.1 10.6 9.4z" fill="#868686"/><path d="M10.2 14.7H14.8V15.5H10.2z" fill="#868686"/></svg>
<div style="position:absolute;left:340px;top:913px;width:137px;height:24px;box-sizing:border-box;border:1px solid #21507a;border-radius:5px"></div>
<div class="t" style="left:340px;top:913.62px;width:137px;text-align:center;font-size:13.9px;line-height:24px;color:#3677ad;-webkit-text-stroke:0.1px currentColor">COMMAND</div>
<div class="t" style="left:487.7px;top:917.50px;font-size:15.85px;line-height:15.85px;color:#8c8c8c;font-weight:400;">ATHPowerShellCommandLineParame...</div>
<svg style="position:absolute;left:781.70px;top:912.72px;color:#8a8a8a" width="25" height="25" viewBox="0 0 25 25" fill="#8a8a8a"><g fill="none" stroke="currentColor" stroke-width="1.7" stroke-linejoin="miter"><path d="M1 3.6L9.3 2.3V10.6H1z"/><path d="M12 1.9L24.2 0.8V10.6H12z"/><path d="M1 13.2H9.3V22.6L1 21.3z"/><path d="M12 13.2H24.2V24.2L12 22.9z"/></g></svg>
<div class="t" style="left:929.3px;top:917.38px;font-size:16px;line-height:16px;color:#8c8c8c;font-weight:400;">Executes</div>
<div style="position:absolute;left:250px;top:957px;width:705px;height:1px;background:#17191d"></div>
<div style="position:absolute;left:955px;top:0px;width:959px;height:76px;background:#0a0e1a"></div>
<div style="position:absolute;left:955px;top:76px;width:959px;height:889px;background:#171b27"></div>
<div style="position:absolute;left:955px;top:76px;width:1px;height:889px;background:#191d2d"></div>
<svg style="position:absolute;left:970.50px;top:24.50px;" width="24" height="24" viewBox="0 0 24 24" fill="#4fb6f0"><path d="M19 6.41 17.59 5 12 10.59 6.41 5 5 6.41 10.59 12 5 17.59 6.41 19 12 13.41 17.59 19 19 17.59 13.41 12z"/></svg>
<div class="t" style="left:1010.3px;top:25.81px;font-size:22.2px;line-height:22.2px;color:#d4d4d4;font-weight:400;">Create a new payload</div>
<div class="t" style="left:1000.3px;top:111.48px;font-size:16.8px;line-height:16.8px;color:#4fb6f0;font-weight:400;letter-spacing:-0.1px;transform-origin:left top;transform:scaleX(0.955)">GENERAL</div>
<div class="t" style="left:1116.7px;top:111.48px;font-size:16.8px;line-height:16.8px;color:#c8c8c8;font-weight:400;letter-spacing:-0.1px;transform-origin:left top;transform:scaleX(0.98)">COMMANDS</div>
<div class="t" style="left:1256.0px;top:111.48px;font-size:16.8px;line-height:16.8px;color:#c8c8c8;font-weight:400;letter-spacing:-0.1px;transform-origin:left top;transform:scaleX(0.98)">OUTPUT</div>
<div class="t" style="left:1365.8px;top:111.48px;font-size:16.8px;line-height:16.8px;color:#c8c8c8;font-weight:400;letter-spacing:0.1px">REMEDIATION</div>
<div style="position:absolute;left:980px;top:149px;width:910px;height:1px;background:#2c3039"></div>
<div style="position:absolute;left:980px;top:146px;width:116px;height:3px;background:#4fb6f0"></div>
<div class="t" style="left:980.5px;top:198.86px;font-size:18px;line-height:18px;color:#b8b8b8;font-weight:400;">Name*</div>
<div style="position:absolute;left:980px;top:226px;width:910px;height:1px;background:#b2b4b9"></div>
<div class="t" style="left:980.5px;top:276.36px;font-size:18px;line-height:18px;color:#b8b8b8;font-weight:400;">Description</div>
<div style="position:absolute;left:980px;top:355px;width:910px;height:1px;background:#b2b4b9"></div>
<div class="t" style="left:980.5px;top:401.86px;font-size:18px;line-height:18px;color:#b8b8b8;font-weight:400;">Attack patterns</div>
<svg style="position:absolute;left:1811px;top:403px" width="20" height="20" viewBox="0 0 20 20"><path d="M1 10H19M10 1V19" stroke="#f4f4f4" stroke-width="2.4"/></svg>
<svg style="position:absolute;left:1860.40px;top:398.80px;" width="29.3" height="29.3" viewBox="0 0 24 24" fill="#f2f2f2"><path d="M7 10l5 5 5-5z"/></svg>
<div style="position:absolute;left:980px;top:429px;width:910px;height:1px;background:#b2b4b9"></div>
<div class="t" style="left:980.5px;top:475.16px;font-size:18px;line-height:18px;color:#b8b8b8;font-weight:400;">Tags</div>
<svg style="position:absolute;left:1811px;top:476px" width="20" height="20" viewBox="0 0 20 20"><path d="M1 10H19M10 1V19" stroke="#f4f4f4" stroke-width="2.4"/></svg>
<svg style="position:absolute;left:1860.40px;top:470.90px;" width="29.3" height="29.3" viewBox="0 0 24 24" fill="#f2f2f2"><path d="M7 10l5 5 5-5z"/></svg>
<div style="position:absolute;left:980px;top:502px;width:910px;height:1px;background:#b2b4b9"></div>
<div class="t" style="left:980.5px;top:523.59px;font-size:13.6px;line-height:13.6px;color:#b8b8b8;font-weight:400;">Expectations *</div>
<div class="t" style="left:980.5px;top:552.06px;font-size:18px;line-height:18px;color:#f0f0f0;font-weight:400;">Prevention, Detection</div>
<svg style="position:absolute;left:1860.40px;top:546.50px;" width="29.3" height="29.3" viewBox="0 0 24 24" fill="#f2f2f2"><path d="M7 10l5 5 5-5z"/></svg>
<div style="position:absolute;left:980px;top:580px;width:910px;height:1px;background:#b2b4b9"></div>
<div style="position:absolute;left:1673px;top:601px;width:104px;height:45px;background:#59bbfc;border-radius:5px"></div>
<div class="t" style="left:1673px;top:601px;width:104px;height:45px;text-align:center;font-size:17.4px;line-height:45px;color:#0d1a2a;-webkit-text-stroke:0.1px currentColor"><span style="display:inline-block;transform:scaleX(0.9)">CANCEL</span></div>
<div style="position:absolute;left:1787px;top:601px;width:103px;height:45px;background:#2d313b;border-radius:5px"></div>
<div class="t" style="left:1787px;top:601px;width:103px;height:45px;text-align:center;font-size:17.4px;line-height:45px;color:#6a6d74;-webkit-text-stroke:0.1px currentColor"><span style="display:inline-block;transform:scaleX(0.9)">CREATE</span></div>
</body></html>
